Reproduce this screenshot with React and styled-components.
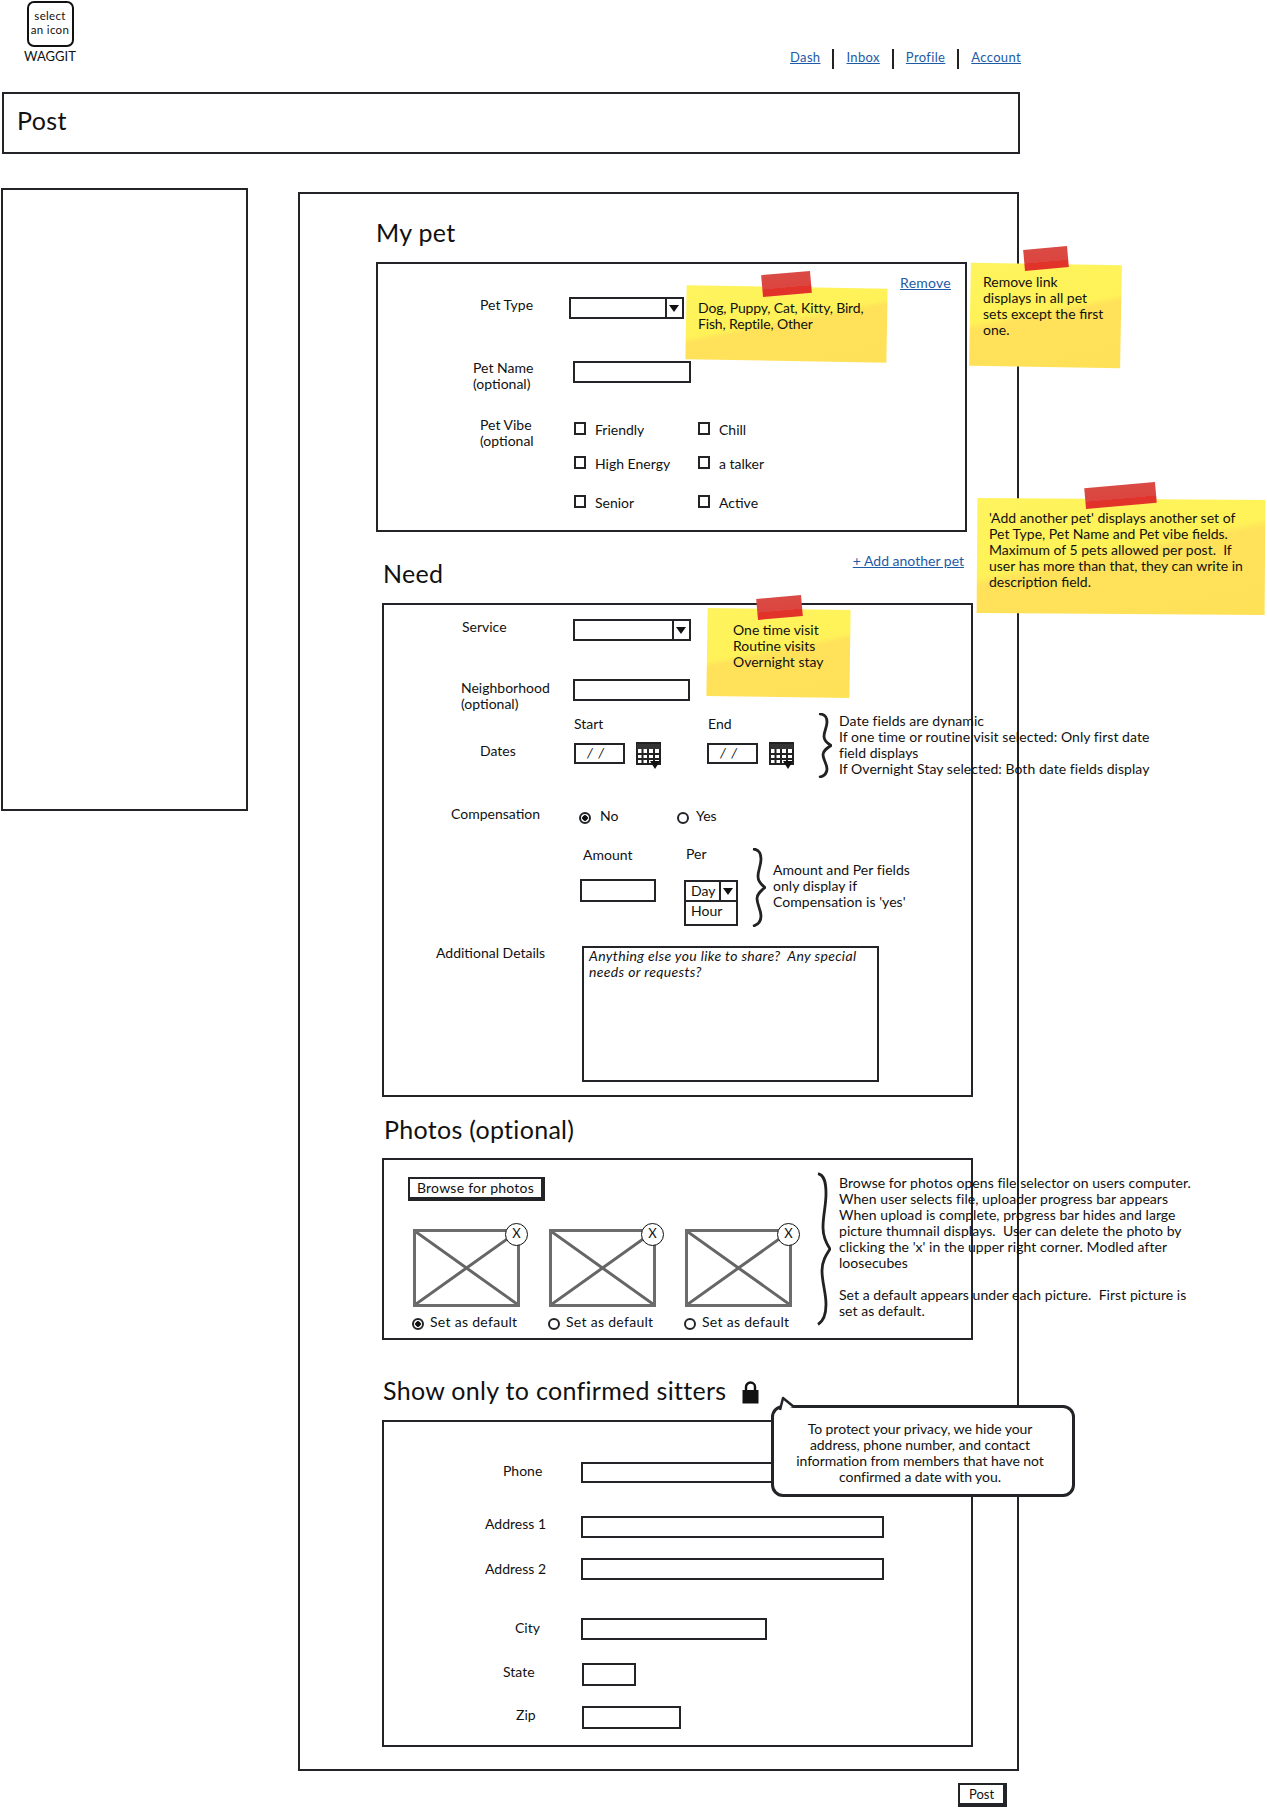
import React from "react";
import styled, { createGlobalStyle } from "styled-components";

const INK = "#222428";
const LINK = "#1d5ba6";

const GlobalStyle = createGlobalStyle`
	html, body {
		margin: 0;
		padding: 0;
		background: #fff;
	}
	body {
		font-family: "Lato", "Liberation Sans", sans-serif;
		font-size: 14px;
		line-height: 16px;
		color: #111;
	}
`;

const Calendar = () => (
	<CalendarBox viewBox="0 0 25 27">
		<path d="M1 1h23v21H1z" fill="#fff" stroke="#222" strokeWidth="2" />
		<path d="M1 2h23v5H1z" fill="#333" />
		<path d="M1 12h23M1 17h23M6.500 7v15M12 7v15M18 7v15" stroke="#222" strokeWidth="2" />
		<path d="M14 19h10l-5 8z" fill="#111" />
	</CalendarBox>
);

const Brace = ({ x, y, w, h }) => (
	<BraceSvg $x={x} $y={y} $w={w} $h={h} viewBox="0 0 14 100" preserveAspectRatio="none">
		<path
			d="M1 1C7 2 9 6 9 14C9 22 6 28 6 36C6 42 9 46 13 50C9 54 5 58 5 64C5 72 9 78 9 86C9 93 6 97 1 99"
			fill="none"
			stroke="#222"
			strokeWidth="2.800"
			vectorEffect="non-scaling-stroke"
		/>
	</BraceSvg>
);

const Sticky = ({ x, y, w, h, tilt, tape, pad, children }) => (
	<Note $x={x} $y={y} $w={w} $h={h} $tilt={tilt} $pad={pad}>
		<Tape $x={tape.x} $y={tape.y} $w={tape.w} $h={tape.h} />
		<NoteText>{children}</NoteText>
	</Note>
);

const Radio = ({ on }) => <RadioDot $on={on} />;

const Check = ({ children }) => (
	<CheckItem>
		<CheckBox />
		{children}
	</CheckItem>
);

const Photo = ({ selected }) => (
	<PhotoTile>
		<PhotoFrame>
			<svg width="100%" height="100%" viewBox="0 0 101 72" preserveAspectRatio="none">
				<path d="M0 0L101 72M0 72L101 0" stroke="#666" strokeWidth="3" />
			</svg>
			<RemoveDot>X</RemoveDot>
		</PhotoFrame>
		<DefaultRow>
			<Radio on={selected} />
			Set as default
		</DefaultRow>
	</PhotoTile>
);

const contactRows = [
	{ label: "Phone", pad: 119, labelWidth: 78, top: 40, width: 303, height: 21, drop: 1 },
	{ label: "Address 1", pad: 101, labelWidth: 96, top: 33, width: 303, height: 22 },
	{ label: "Address 2", pad: 101, labelWidth: 96, top: 20, width: 303, height: 22, drop: 3 },
	{ label: "City", pad: 131, labelWidth: 66, top: 38, width: 186, height: 22, drop: 2 },
	{ label: "State", pad: 119, labelWidth: 79, top: 23, width: 54, height: 23, drop: 1 },
	{ label: "Zip", pad: 132, labelWidth: 66, top: 20, width: 99, height: 23, drop: 1 },
];

export default function App() {
	return (
		<Page>
			<GlobalStyle />

			<Header>
				<LogoBlock>
					<LogoIcon>
						select
						<br />
						an icon
					</LogoIcon>
					<LogoName>WAGGIT</LogoName>
				</LogoBlock>
				<Nav>
					<NavLink href="#">Dash</NavLink>
					<NavSep />
					<NavLink href="#">Inbox</NavLink>
					<NavSep />
					<NavLink href="#">Profile</NavLink>
					<NavSep />
					<NavLink href="#">Account</NavLink>
				</Nav>
			</Header>

			<TitleBar>Post</TitleBar>

			<Body>
				<SideBox />
				<Main>
					<SectionTitle>My pet</SectionTitle>
					<PetPanel>
						<RemoveRow>
							<TextLink href="#">Remove</TextLink>
						</RemoveRow>
						<Row $pad={102}>
							<Label $w={89}>Pet Type</Label>
							<Select $w={115} $h={22}>
								<SelectCell />
								<Arrow />
							</Select>
						</Row>
						<Row $pad={95} $top={41}>
							<Label $w={100}>
								Pet Name
								<br />
								(optional)
							</Label>
							<Input $w={118} $h={22} $drop={1} />
						</Row>
						<Row $pad={102} $top={25}>
							<Label $w={94}>
								Pet Vibe
								<br />
								(optional
							</Label>
							<CheckGrid>
								<Check>Friendly</Check>
								<Check>Chill</Check>
								<Check>High Energy</Check>
								<Check>a talker</Check>
								<Check>Senior</Check>
								<Check>Active</Check>
							</CheckGrid>
						</Row>
					</PetPanel>

					<NeedHead>
						<SectionTitle>Need</SectionTitle>
						<AddLink href="#">+ Add another pet</AddLink>
					</NeedHead>
					<NeedPanel>
						<Row $pad={78} $top={14}>
							<Label $w={111}>Service</Label>
							<Select $w={118} $h={22}>
								<SelectCell />
								<Arrow />
							</Select>
						</Row>
						<Row $pad={77} $top={38}>
							<Label $w={112} $drop={1}>
								Neighborhood
								<br />
								(optional)
							</Label>
							<Input $w={117} $h={22} />
						</Row>
						<Row $pad={190} $top={4}>
							<Label $w={134}>Start</Label>
							<Label>End</Label>
						</Row>
						<Row $pad={96} $top={10}>
							<Label $w={94} $drop={1}>Dates</Label>
							<DateGroup>
								<DateInput>/ /</DateInput>
								<Calendar />
							</DateGroup>
							<DateGroup $gap={46}>
								<DateInput>/ /</DateInput>
								<Calendar />
							</DateGroup>
						</Row>
						<Row $pad={67} $top={39}>
							<Label $w={128} $drop={-2}>Compensation</Label>
							<RadioOption $w={98} $gap={9}>
								<Radio on />
								No
							</RadioOption>
							<RadioOption $gap={7}>
								<Radio />
								Yes
							</RadioOption>
						</Row>
						<Row $pad={199} $top={23}>
							<Label $w={103}>Amount</Label>
							<Label $drop={-1}>Per</Label>
						</Row>
						<Row $pad={196} $top={16}>
							<Input $w={76} $h={23} />
							<PerCombo>
								<Select $w={54} $h={22}>
									<SelectCell>Day</SelectCell>
									<Arrow />
								</Select>
								<HourOption>Hour</HourOption>
							</PerCombo>
						</Row>
						<Row $pad={52} $top={19}>
							<Label $w={146}>Additional Details</Label>
							<TextArea>Anything else you like to share?&nbsp; Any special needs or requests?</TextArea>
						</Row>
					</NeedPanel>

					<PhotosTitle>Photos (optional)</PhotosTitle>
					<PhotosPanel>
						<BrowseButton>Browse for photos</BrowseButton>
						<PhotoRow>
							<Photo selected />
							<Photo />
							<Photo />
						</PhotoRow>
					</PhotosPanel>

					<SittersHead>
						<SittersTitle>Show only to confirmed sitters</SittersTitle>
						<LockIcon viewBox="0 0 17 23">
							<path d="M4 10V6a4.500 4.500 0 0 1 9 0v4" fill="none" stroke="#111" strokeWidth="2.400" />
							<path d="M0.500 9h16v13.500h-16z" fill="#111" />
						</LockIcon>
					</SittersHead>
					<ContactPanel>
						{contactRows.map((row) => (
							<Row key={row.label} $pad={row.pad} $top={row.top}>
								<Label $w={row.labelWidth} $drop={row.drop}>{row.label}</Label>
								<Input $w={row.width} $h={row.height} />
							</Row>
						))}
					</ContactPanel>
				</Main>
			</Body>

			<Footer>
				<PostButton>Post</PostButton>
			</Footer>

			<Sticky x={686} y={287} w={201} h={74} tilt={1} pad="13px 8px 0 12px" tape={{ x: 76, y: -14, w: 49, h: 22 }}>
				<NarrowLine>
					Dog, Puppy, Cat, Kitty, Bird,
					<br />
					Fish, Reptile, Other
				</NarrowLine>
			</Sticky>
			<Sticky x={970} y={264} w={151} h={103} tilt={1} pad="10px 6px 0 13px" tape={{ x: 54, y: -16, w: 44, h: 21 }}>
				Remove link
				<br />
				displays in all pet
				<br />
				sets except the first
				<br />
				one.
			</Sticky>
			<Sticky x={977} y={499} w={288} h={115} tilt={0.4} pad="11px 6px 0 12px" tape={{ x: 108, y: -14, w: 71, h: 21 }}>
				'Add another pet' displays another set of
				<br />
				Pet Type, Pet Name and Pet vibe fields.
				<br />
				Maximum of 5 pets allowed per post.&nbsp; If
				<br />
				user has more than that, they can write in
				<br />
				description field.
			</Sticky>
			<Sticky x={707} y={609} w={143} h={88} tilt={0.8} pad="13px 0 0 26px" tape={{ x: 50, y: -12, w: 45, h: 21 }}>
				One time visit
				<br />
				Routine visits
				<br />
				Overnight stay
			</Sticky>

			<Brace x={818} y={713} w={14} h={65} />
			<SideNote $x={839} $y={713}>
				Date fields are dynamic
				<br />
				If one time or routine visit selected: Only first date
				<br />
				field displays
				<br />
				If Overnight Stay selected: Both date fields display
			</SideNote>

			<Brace x={752} y={848} w={14} h={79} />
			<SideNote $x={773} $y={862}>
				Amount and Per fields
				<br />
				only display if
				<br />
				Compensation is 'yes'
			</SideNote>

			<Brace x={817} y={1172} w={14} h={154} />
			<SideNote $x={839} $y={1175}>
				Browse for photos opens file selector on users computer.
				<br />
				When user selects file, uploader progress bar appears
				<br />
				When upload is complete, progress bar hides and large
				<br />
				picture thumnail displays.&nbsp; User can delete the photo by
				<br />
				clicking the 'x' in the upper right corner. Modled after
				<br />
				loosecubes
				<br />
				<br />
				Set a default appears under each picture.&nbsp; First picture is
				<br />
				set as default.
			</SideNote>

			<Callout>
				<CalloutTail viewBox="0 0 16 14">
					<path d="M1 13L4 1L15 10" fill="#fff" stroke={INK} strokeWidth="2.500" strokeLinejoin="round" />
				</CalloutTail>
				To protect your privacy, we hide your
				<br />
				address, phone number, and contact
				<br />
				information from members that have not
				<br />
				confirmed a date with you.
			</Callout>
		</Page>
	);
}

const Page = styled.div`
	position: relative;
	width: 1267px;
	height: 1809px;
	overflow: hidden;
	background: #fff;
`;

const Header = styled.header`
	display: flex;
	justify-content: space-between;
	width: 1021px;
	height: 92px;
`;

const LogoBlock = styled.div`
	display: flex;
	flex-direction: column;
	align-items: center;
	width: 54px;
	margin-left: 23px;
	padding-top: 1px;
`;

const LogoIcon = styled.div`
	box-sizing: border-box;
	width: 47px;
	height: 46px;
	padding-top: 6px;
	border: 2.500px solid #111;
	border-radius: 7px;
	font-size: 11.500px;
	line-height: 14px;
	letter-spacing: 0.3px;
	text-align: center;
	white-space: nowrap;
`;

const LogoName = styled.div`
	margin-top: 1px;
	font-size: 13px;
	line-height: 16px;
`;

const Nav = styled.nav`
	display: flex;
	align-items: center;
	gap: 12px;
	height: 24px;
	margin-top: 45px;
`;

const NavLink = styled.a`
	color: ${LINK};
	font-size: 13px;
	letter-spacing: 0.35px;
	text-decoration: underline;
`;

const NavSep = styled.span`
	width: 2px;
	height: 20px;
	margin-top: 3px;
	background: #222;
`;

const TitleBar = styled.div`
	box-sizing: border-box;
	width: 1018px;
	height: 62px;
	margin-left: 2px;
	padding: 10px 0 0 13px;
	border: 2px solid ${INK};
	font-size: 25px;
	line-height: 32px;
	letter-spacing: 0.4px;
`;

const Body = styled.div`
	display: flex;
	align-items: flex-start;
	margin-top: 34px;
	margin-left: 1px;
`;

const SideBox = styled.aside`
	box-sizing: border-box;
	width: 247px;
	height: 623px;
	border: 2px solid ${INK};
`;

const Main = styled.main`
	box-sizing: border-box;
	width: 721px;
	margin: 4px 0 0 50px;
	padding: 22px 0 22px 76px;
	border: 2px solid ${INK};
`;

const SectionTitle = styled.h2`
	margin: 0 0 14px;
	font-size: 25px;
	font-weight: 400;
	line-height: 32px;
	letter-spacing: 0.3px;
`;

const Panel = styled.section`
	box-sizing: border-box;
	width: 591px;
	border: 2px solid ${INK};
`;

const PetPanel = styled(Panel)`
	height: 270px;
`;

const RemoveRow = styled.div`
	display: flex;
	justify-content: flex-end;
	height: 33px;
	padding: 11px 14px 0 0;
	box-sizing: border-box;
`;

const TextLink = styled.a`
	color: ${LINK};
	letter-spacing: 0.25px;
	text-decoration: underline;
`;

const Row = styled.div`
	display: flex;
	align-items: flex-start;
	margin-top: ${(p) => p.$top || 0}px;
	padding-left: ${(p) => p.$pad}px;
`;

const Label = styled.div`
	flex: none;
	width: ${(p) => (p.$w ? `${p.$w}px` : "auto")};
	margin-top: ${(p) => p.$drop || 0}px;
	white-space: nowrap;
`;

const Input = styled.div`
	flex: none;
	box-sizing: border-box;
	width: ${(p) => p.$w}px;
	height: ${(p) => p.$h}px;
	margin-top: ${(p) => p.$drop || 0}px;
	border: 2px solid ${INK};
	background: #fff;
`;

const Select = styled.div`
	display: flex;
	box-sizing: border-box;
	width: ${(p) => p.$w}px;
	height: ${(p) => p.$h}px;
	border: 2px solid ${INK};
	background: #fff;
`;

const SelectCell = styled.div`
	flex: 1;
	padding-left: 5px;
	line-height: 18px;
`;

const Arrow = styled.div`
	position: relative;
	flex: none;
	width: 15px;
	border-left: 2px solid ${INK};

	&::after {
		content: "";
		position: absolute;
		left: 2px;
		top: 6px;
		border-style: solid;
		border-width: 7px 5.500px 0;
		border-color: #111 transparent transparent;
	}
`;

const CheckGrid = styled.div`
	display: grid;
	grid-template-columns: 123px auto;
	grid-template-rows: 34px 39px 14px;
	margin-top: 5px;
	column-gap: 1px;
`;

const CheckItem = styled.label`
	display: flex;
	align-items: flex-start;
	gap: 9px;
	height: 14px;
	line-height: 15px;
`;

const CheckBox = styled.span`
	box-sizing: border-box;
	width: 12px;
	height: 13px;
	border: 2px solid ${INK};
`;

const NeedHead = styled.div`
	display: flex;
	justify-content: space-between;
	width: 581px;
	margin: 25px 0 14px 7px;

	${SectionTitle} {
		margin: 0;
	}
`;

const AddLink = styled(TextLink)`
	margin-top: -4px;
	letter-spacing: 0;
`;

const NeedPanel = styled(Panel)`
	height: 494px;
	margin-left: 6px;
`;

const DateGroup = styled.div`
	display: flex;
	align-items: flex-start;
	gap: 11px;
	margin-left: ${(p) => p.$gap || 0}px;
`;

const DateInput = styled.div`
	box-sizing: border-box;
	width: 51px;
	height: 21px;
	margin-top: 1px;
	padding-left: 11px;
	border: 2px solid ${INK};
	font-style: italic;
	word-spacing: 2px;
	line-height: 15px;
`;

const CalendarBox = styled.svg`
	width: 25px;
	height: 27px;
`;

const RadioOption = styled.div`
	display: flex;
	align-items: flex-start;
	gap: ${(p) => p.$gap}px;
	width: ${(p) => (p.$w ? `${p.$w}px` : "auto")};
`;

const RadioDot = styled.span`
	flex: none;
	box-sizing: border-box;
	width: 12px;
	height: 12px;
	margin-top: 4px;
	border: 2px solid ${INK};
	border-radius: 50%;
	background: ${(p) => (p.$on ? "radial-gradient(circle, #111 0 2.500px, #fff 3px)" : "#fff")};
`;

const PerCombo = styled.div`
	display: flex;
	flex-direction: column;
	margin: 1px 0 0 28px;
`;

const HourOption = styled.div`
	box-sizing: border-box;
	width: 54px;
	height: 24px;
	padding-left: 5px;
	border: 2px solid ${INK};
	border-top: 0;
	line-height: 18px;
`;

const TextArea = styled.div`
	box-sizing: border-box;
	width: 297px;
	height: 136px;
	margin-top: 1px;
	padding: 0 5px;
	border: 2px solid ${INK};
	font-style: italic;
	letter-spacing: 0.35px;
`;

const PhotosTitle = styled(SectionTitle)`
	margin: 16px 0 13px 8px;
`;

const PhotosPanel = styled(Panel)`
	height: 182px;
	margin-left: 6px;
`;

const BrowseButton = styled.button`
	display: block;
	box-sizing: border-box;
	width: 137px;
	height: 24px;
	margin: 17px 0 0 24px;
	padding: 0;
	border: 2px solid ${INK};
	border-width: 2px 4px 4px 2px;
	background: #fff;
	font: inherit;
	letter-spacing: 0.25px;
	color: #111;
`;

const PhotoRow = styled.div`
	display: flex;
	gap: 29px;
	margin-top: 28px;
	padding-left: 29px;
`;

const PhotoTile = styled.div`
	width: 107px;
`;

const PhotoFrame = styled.div`
	position: relative;
	box-sizing: border-box;
	height: 78px;
	border: 3px solid #6c6c6c;

	svg {
		display: block;
	}
`;

const RemoveDot = styled.span`
	position: absolute;
	top: -9px;
	right: -11px;
	box-sizing: border-box;
	width: 23px;
	height: 23px;
	border: 1.500px solid #111;
	border-radius: 50%;
	background: #fff;
	font-size: 13px;
	line-height: 18px;
	text-align: center;
`;

const DefaultRow = styled.div`
	display: flex;
	align-items: flex-start;
	gap: 6px;
	margin: 7px 0 0 -1px;
	white-space: nowrap;
	letter-spacing: 0.3px;
`;

const SittersHead = styled.div`
	display: flex;
	align-items: center;
	gap: 16px;
	height: 32px;
	margin: 34px 0 14px 7px;
`;

const SittersTitle = styled.h2`
	margin: 0;
	font-size: 25px;
	font-weight: 400;
	line-height: 32px;
	letter-spacing: 0.3px;
`;

const LockIcon = styled.svg`
	width: 17px;
	height: 23px;
	margin-top: 4px;
`;

const ContactPanel = styled(Panel)`
	height: 327px;
	margin-left: 6px;
`;

const Footer = styled.footer`
	display: flex;
	justify-content: flex-end;
	width: 1007px;
	margin-top: 12px;
`;

const PostButton = styled.button`
	box-sizing: border-box;
	width: 49px;
	height: 24px;
	padding: 0;
	border: 2px solid ${INK};
	border-width: 2px 4px 4px 2px;
	background: #fff;
	font: inherit;
	font-size: 13px;
	color: #111;
`;

const Note = styled.div`
	position: absolute;
	left: ${(p) => p.$x}px;
	top: ${(p) => p.$y}px;
	box-sizing: border-box;
	width: ${(p) => p.$w}px;
	height: ${(p) => p.$h}px;
	padding: ${(p) => p.$pad};

	&::before {
		content: "";
		position: absolute;
		inset: 0;
		background: linear-gradient(168deg, #fff45e 0%, #fff258 45%, #ffe25a 50%, #ffe158 100%);
		transform: rotate(${(p) => p.$tilt}deg);
	}
`;

const NoteText = styled.div`
	position: relative;
	white-space: nowrap;
`;

const NarrowLine = styled.div`
	letter-spacing: -0.15px;
`;

const Tape = styled.div`
	position: absolute;
	left: ${(p) => p.$x}px;
	top: ${(p) => p.$y}px;
	z-index: 1;
	width: ${(p) => p.$w}px;
	height: ${(p) => p.$h}px;
	background: linear-gradient(180deg, #da4a44 0%, #dc4540 65%, #e2332b 66%, #e2332b 100%);
	transform: rotate(-5deg);
`;

const BraceSvg = styled.svg`
	position: absolute;
	left: ${(p) => p.$x}px;
	top: ${(p) => p.$y}px;
	width: ${(p) => p.$w}px;
	height: ${(p) => p.$h}px;
`;

const SideNote = styled.div`
	position: absolute;
	left: ${(p) => p.$x}px;
	top: ${(p) => p.$y}px;
	white-space: nowrap;
	letter-spacing: 0.05px;
`;

const Callout = styled.aside`
	position: absolute;
	left: 771px;
	top: 1405px;
	box-sizing: border-box;
	width: 304px;
	height: 92px;
	padding: 13px 6px 0 0;
	border: 3px solid ${INK};
	border-radius: 12px;
	background: #fff;
	text-align: center;
	letter-spacing: -0.05px;
`;

const CalloutTail = styled.svg`
	position: absolute;
	left: 5px;
	top: -11px;
	width: 16px;
	height: 14px;
	overflow: visible;
`;
